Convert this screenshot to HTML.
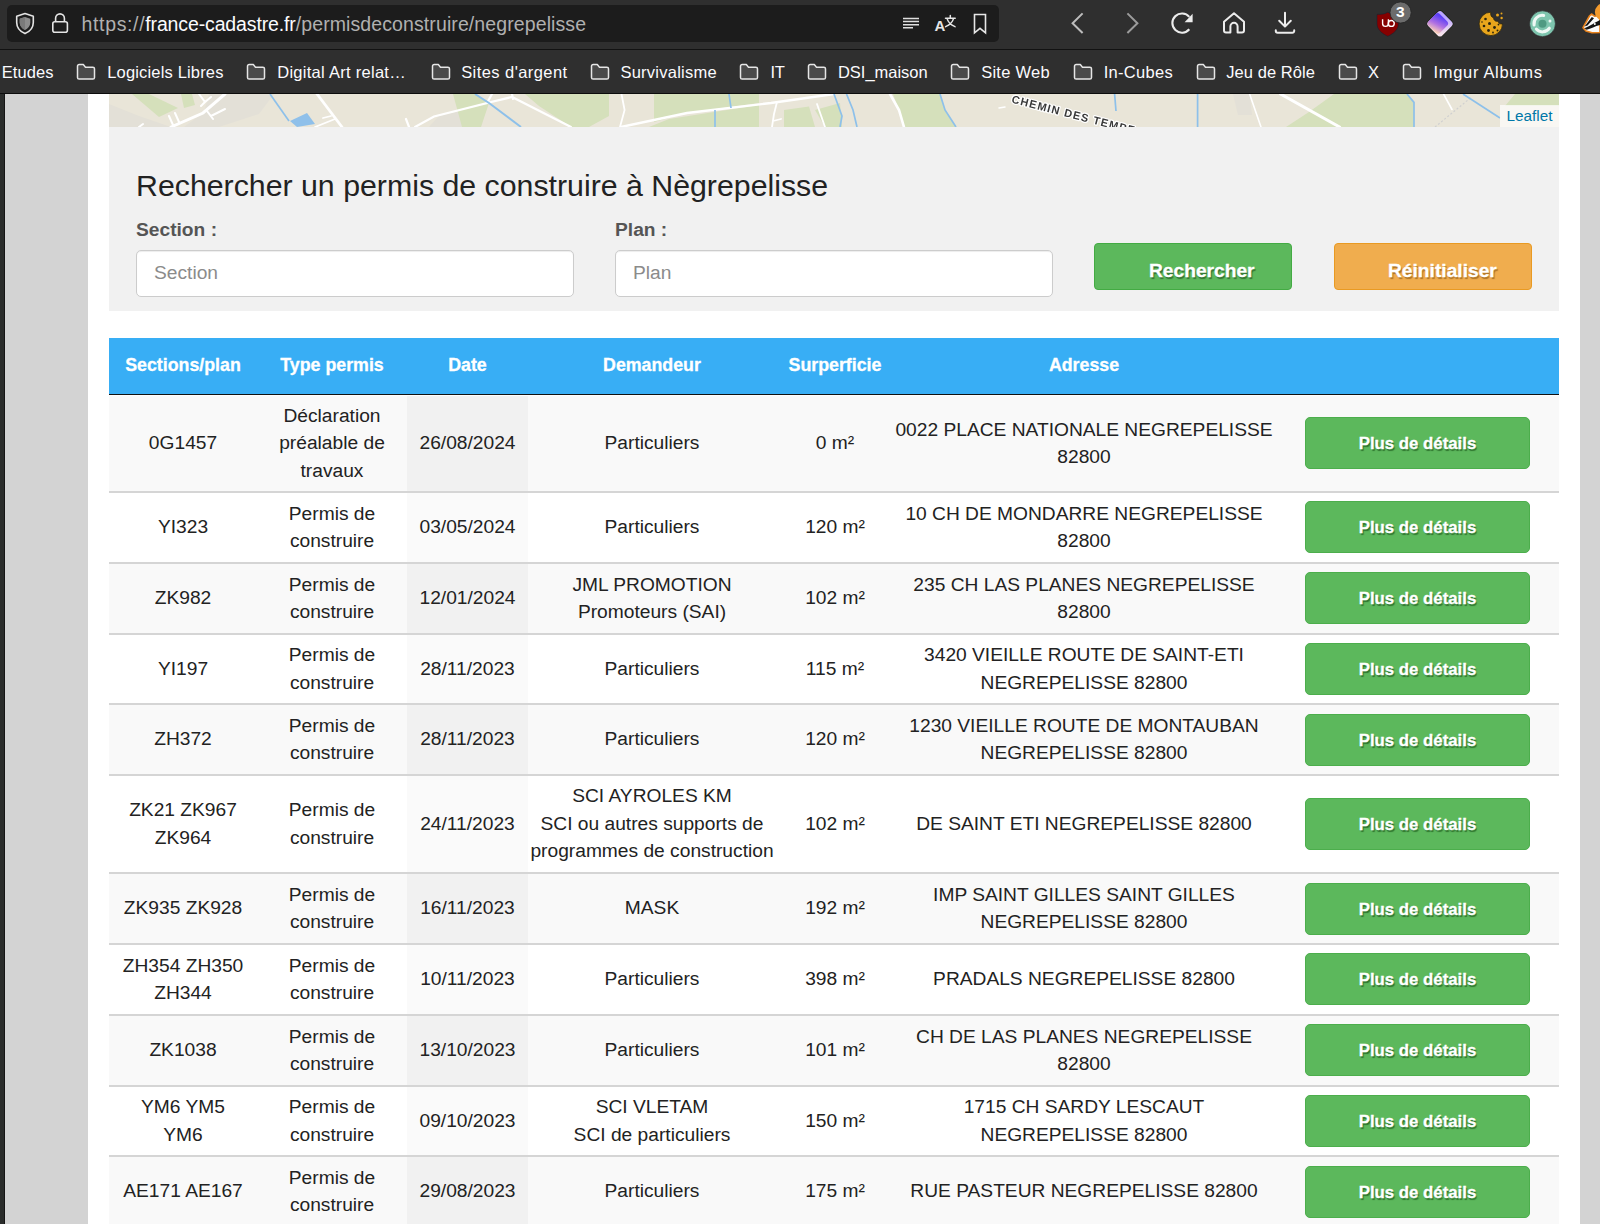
<!DOCTYPE html>
<html lang="fr">
<head>
<meta charset="utf-8">
<title>Permis de construire Nègrepelisse</title>
<style>
*{box-sizing:border-box}
html,body{margin:0;padding:0}
body{width:1600px;height:1224px;overflow:hidden;position:relative;background:#d3d3d3;font-family:"Liberation Sans",sans-serif;color:#111}
/* ---------- browser chrome ---------- */
#chrome{position:absolute;left:0;top:0;width:1600px;height:94px;background:#2f2f2f;z-index:10}
#nav{position:absolute;left:0;top:0;width:1600px;height:49px}
#sep{position:absolute;left:0;top:49px;width:1600px;height:1px;background:#121212}
#urlbar{position:absolute;left:7px;top:5px;width:992px;height:37px;background:#1c1c1c;border-radius:5px}
#url{position:absolute;left:74.5px;top:7.2px;font-size:19.5px;line-height:24px;color:#b0b0b0;white-space:nowrap}
#url b{font-weight:normal;color:#fbfbfe}
#bm{position:absolute;left:0;top:50px;width:1600px;height:43px}
#bm span{position:absolute;top:11px;font-size:16.5px;line-height:22px;color:#fbfbfe;white-space:nowrap}
#chromeline{position:absolute;left:0;top:93px;width:1600px;height:1px;background:#0c0c0c}
.ico{position:absolute}
/* ---------- page ---------- */
#leftstrip{position:absolute;left:0;top:94px;width:5px;height:1130px;background:#2a2c2b;border-right:1px solid #151515}
#white{position:absolute;left:88px;top:94px;width:1492px;height:1130px;background:#fff}
#map{position:absolute;left:109px;top:94px;width:1450px;height:33px;background:#e9e5d8;overflow:hidden}
#leaflet{position:absolute;right:0;bottom:0;width:59px;height:22px;background:rgba(255,255,255,.7);color:#0078a8;font-size:15.3px;line-height:22px;text-align:center}
#search{position:absolute;left:109px;top:127px;width:1450px;height:184px;background:#f1f1f1}
#search h3{position:absolute;left:27px;top:40.5px;margin:0;font-weight:normal;font-size:30.3px;line-height:36px;color:#222;white-space:nowrap}
.lbl{position:absolute;top:91.5px;font-weight:bold;font-size:19.2px;line-height:22px;color:#555;white-space:nowrap}
.inp{position:absolute;top:123px;width:438px;height:47px;background:#fff;border:1px solid #ccc;border-radius:5px;box-shadow:inset 0 1px 1px rgba(0,0,0,.075);font-size:19.2px;line-height:43px;color:#8b8b8b;padding-left:17px}
.btn{position:absolute;color:#fff;font-weight:bold;-webkit-text-stroke:.3px #fff;text-shadow:1.2px 1.8px 1px rgba(0,30,0,.45);border-radius:4px;white-space:nowrap}
.bg{background:#5cb85c;border:1px solid #43ab43}
.bo{background:#f0ad4e;border:1px solid #e99a22;text-shadow:1.2px 1.8px 1px rgba(110,60,0,.5)}
/* ---------- table ---------- */
#tbl{position:absolute;left:109px;top:338px;width:1450px;border-collapse:separate;border-spacing:0;table-layout:fixed;font-size:19.2px;line-height:27.43px;color:#222}
#tbl th{-webkit-text-stroke:.3px #fff;background:#38aef5;color:#fff;font-weight:bold;font-size:17.8px;height:57px;padding:0 0 1px;text-align:center;border-bottom:1px solid #111}
#tbl td{text-align:center;padding:0 0 1px;vertical-align:middle;border-bottom:2px solid #d5d5d5}
#tbl tr:first-child td{border-top:1px solid #fefefe}
#tbl tr.o td{background:#f9f9f9}
#tbl tr.o td.d{background:#f1f1f1}
#tbl tr.e td{background:#fff}
#tbl tr.e td.d{background:#fafafa}
#tbl td.b{vertical-align:top;padding:0}
.db{-webkit-text-stroke:.3px #fff;display:block;margin:0 0 0 31px;width:225px;height:52px;background:#5cb85c;border:1px solid #4cae4c;border-radius:5px;color:#fff;font-weight:bold;font-size:16.8px;line-height:51px;text-shadow:1.2px 1.8px 1px rgba(0,50,0,.5)}
</style>
</head>
<body>
<div id="white"></div>
<div id="leftstrip"></div>
<div id="map"><svg width="1450" height="33" viewBox="0 0 1450 33" style="position:absolute;left:0;top:0;filter:blur(.45px)">
<rect width="1450" height="33" fill="#e9e5d8"/>
<g fill="#e3e0d7"><path d="M0 10 L30 22 L62 33 H0 Z"/><path d="M100 0 H165 L150 20 L110 33 H75 L95 18 Z"/><path d="M1124 0 H1140.600 L1143 21 H1129 Z"/><path d="M330 22 L378 10 L372 33 H320 Z"/></g>
<g fill="#d5e0bb">
<path d="M23 0 H40 L69 14 L50 23 Z"/><path d="M72 0 H83 L86 11 L75 14 Z"/>
<path d="M344 0 H366 L380 9 L372 33 H353 Z"/>
<path d="M416 0 H500 V22 L480 33 H462 L430 12 Z"/>
<path d="M545 0 H650 V9 L578 19 L545 28 Z"/><path d="M560 25 L650 11 V33 H540 Z"/>
<path d="M675 16 L700 12.500 L706 33 H675 Z"/><path d="M706 16 L731 9 L733 33 H716 Z"/>
<path d="M784 0 H831 L836 16 L847 33 H795 L790 16 Z"/>
<path d="M1225 0 H1298 L1305 8.400 V33 H1177 L1200 18 Z"/>
<path d="M1406 0 H1450 V12 H1396 Z"/><path d="M1270 0 H1290 L1280 9 Z"/>
</g>
<g fill="none" stroke="#fff" stroke-linecap="round">
<path d="M62 33 L94 19 L116 0" stroke-width="3"/><path d="M30 33 L34 30 M60 22 L64 31 M66 19 L70 28 M90 0 L96 8 L102 3 M98 17 L104 25 M102 22 L116 15 M96 8 L92 12" stroke-width="2"/>
<path d="M208 0 L233 33" stroke-width="2.800"/><path d="M206 33 L226 25 M214 24 L222 22" stroke-width="1.800"/>
<path d="M297 25 L300 33 M306 33 L325 22.500 L378 9 L383 0" stroke-width="2.200"/><path d="M378 9 L403 3 L462 33 M403 0 L404 5" stroke-width="2.200"/>
<path d="M512.500 0 L515.600 16 L511 33" stroke-width="1.800"/>
<path d="M512 33 L578 19 L662 9 L725 0" stroke-width="2.400"/><path d="M668 8 L665 20 L663 33 M708 10 L716 33 M664 27 L672 25" stroke-width="1.800"/>
<path d="M781 0 L790 16 L795 33" stroke-width="2.600"/><path d="M890 14 L896 13" stroke-width="1.500"/>
<path d="M1140.600 0 L1152 33" stroke-width="1.600"/><path d="M1171.500 0 L1230.600 33" stroke-width="3"/>
<path d="M1334.600 0 L1343 15.500" stroke-width="1.600"/>
</g>
<path d="M1326 33 L1362.800 2.800" fill="none" stroke="#d0d0d0" stroke-width="1.200" stroke-dasharray="2 2"/>
<g fill="none" stroke="#8dc0ea" stroke-width="1.700">
<path d="M161 0 L180 27"/><path d="M366 0 L380 9 L412 33" stroke-width="2"/>
<path d="M620 0 L622 14 M606 16 V33"/><path d="M725 0 L733 22 L731 33 M737.500 0 L744 16 L748 33"/>
<path d="M831 0 L836 16 L847 33"/><path d="M1005.600 0 L1007 17 M1088.600 0 V33"/>
<path d="M1298 0 L1305 8.400 V33"/><path d="M1354 0 L1391 24"/>
</g>
<path d="M181 27 L198 19 L206 30 L188 33 Z" fill="#8fc0ea"/><rect x="934" y="14" width="8" height="3" fill="#8fc0ea"/>
<text transform="translate(902 8.500) rotate(14.500)" font-family="Liberation Sans, sans-serif" font-weight="bold" font-size="11" letter-spacing="1.100" fill="#3a3a3a" stroke="#fff" stroke-width="2.400" paint-order="stroke" stroke-linejoin="round">CHEMIN DES TEMPE</text>
</svg><div id="leaflet">Leaflet</div></div>

<div id="search">
  <h3>Rechercher un permis de construire à Nègrepelisse</h3>
  <div class="lbl" style="left:27px">Section :</div>
  <div class="lbl" style="left:506px">Plan :</div>
  <div class="inp" style="left:27px">Section</div>
  <div class="inp" style="left:506px">Plan</div>
  <div class="btn bg" style="left:985px;top:116px;width:198px;height:47px;font-size:19.2px;line-height:54px;padding-left:54px">Rechercher</div>
  <div class="btn bo" style="left:1225px;top:116px;width:198px;height:47px;font-size:19.2px;line-height:54px;padding-left:53px">Réinitialiser</div>
</div>

<table id="tbl">
<colgroup><col style="width:148px"><col style="width:150px"><col style="width:121px"><col style="width:248px"><col style="width:118px"><col style="width:380px"><col style="width:285px"></colgroup>
<thead><tr><th>Sections/plan</th><th>Type permis</th><th>Date</th><th>Demandeur</th><th>Surperficie</th><th>Adresse</th><th></th></tr></thead>
<tbody>
<tr class="o" style="height:98px"><td>0G1457</td><td>Déclaration<br>préalable de<br>travaux</td><td class="d">26/08/2024</td><td>Particuliers</td><td>0 m²</td><td>0022 PLACE NATIONALE NEGREPELISSE<br>82800</td><td class="b"><span class="db" style="margin-top:21px">Plus de détails</span></td></tr>
<tr class="e" style="height:71px"><td>YI323</td><td>Permis de<br>construire</td><td class="d">03/05/2024</td><td>Particuliers</td><td>120 m²</td><td>10 CH DE MONDARRE NEGREPELISSE<br>82800</td><td class="b"><span class="db" style="margin-top:8px">Plus de détails</span></td></tr>
<tr class="o" style="height:71px"><td>ZK982</td><td>Permis de<br>construire</td><td class="d">12/01/2024</td><td>JML PROMOTION<br>Promoteurs (SAI)</td><td>102 m²</td><td>235 CH LAS PLANES NEGREPELISSE<br>82800</td><td class="b"><span class="db" style="margin-top:8px">Plus de détails</span></td></tr>
<tr class="e" style="height:70px"><td>YI197</td><td>Permis de<br>construire</td><td class="d">28/11/2023</td><td>Particuliers</td><td>115 m²</td><td>3420 VIEILLE ROUTE DE SAINT-ETI<br>NEGREPELISSE 82800</td><td class="b"><span class="db" style="margin-top:8px">Plus de détails</span></td></tr>
<tr class="o" style="height:71px"><td>ZH372</td><td>Permis de<br>construire</td><td class="d">28/11/2023</td><td>Particuliers</td><td>120 m²</td><td>1230 VIEILLE ROUTE DE MONTAUBAN<br>NEGREPELISSE 82800</td><td class="b"><span class="db" style="margin-top:9px">Plus de détails</span></td></tr>
<tr class="e" style="height:98px"><td>ZK21 ZK967<br>ZK964</td><td>Permis de<br>construire</td><td class="d">24/11/2023</td><td>SCI AYROLES KM<br>SCI ou autres supports de<br>programmes de construction</td><td>102 m²</td><td>DE SAINT ETI NEGREPELISSE 82800</td><td class="b"><span class="db" style="margin-top:22px">Plus de détails</span></td></tr>
<tr class="o" style="height:71px"><td>ZK935 ZK928</td><td>Permis de<br>construire</td><td class="d">16/11/2023</td><td>MASK</td><td>192 m²</td><td>IMP SAINT GILLES SAINT GILLES<br>NEGREPELISSE 82800</td><td class="b"><span class="db" style="margin-top:9px">Plus de détails</span></td></tr>
<tr class="e" style="height:71px"><td>ZH354 ZH350<br>ZH344</td><td>Permis de<br>construire</td><td class="d">10/11/2023</td><td>Particuliers</td><td>398 m²</td><td>PRADALS NEGREPELISSE 82800</td><td class="b"><span class="db" style="margin-top:8px">Plus de détails</span></td></tr>
<tr class="o" style="height:71px"><td>ZK1038</td><td>Permis de<br>construire</td><td class="d">13/10/2023</td><td>Particuliers</td><td>101 m²</td><td>CH DE LAS PLANES NEGREPELISSE<br>82800</td><td class="b"><span class="db" style="margin-top:8px">Plus de détails</span></td></tr>
<tr class="e" style="height:70px"><td>YM6 YM5<br>YM6</td><td>Permis de<br>construire</td><td class="d">09/10/2023</td><td>SCI VLETAM<br>SCI de particuliers</td><td>150 m²</td><td>1715 CH SARDY LESCAUT<br>NEGREPELISSE 82800</td><td class="b"><span class="db" style="margin-top:8px">Plus de détails</span></td></tr>
<tr class="o" style="height:71px"><td>AE171 AE167</td><td>Permis de<br>construire</td><td class="d">29/08/2023</td><td>Particuliers</td><td>175 m²</td><td>RUE PASTEUR NEGREPELISSE 82800</td><td class="b"><span class="db" style="margin-top:9px">Plus de détails</span></td></tr>
</tbody>
</table>

<div id="chrome">
  <div id="nav">
    <div id="urlbar">
      <div id="url"><span style="letter-spacing:.65px">https://</span><b style="letter-spacing:-.13px">france-cadastre.fr</b><span style="letter-spacing:.1px">/permisdeconstruire/negrepelisse</span></div>
    </div>
  </div>

<!-- shield -->
<svg class="ico" style="left:14px;top:11px" width="22" height="25" viewBox="0 0 22 25"><path d="M11 2.6 L19.3 5.2 V11.5 C19.3 17 15.6 20.6 11 22.6 C6.4 20.6 2.7 17 2.7 11.500 V5.2 Z" fill="none" stroke="#e4e4e4" stroke-width="1.6" stroke-linejoin="round"/><path d="M11 6 L16.3 7.700 V11.600 C16.3 15.300 14 17.600 11 19.100 C8 17.600 5.700 15.300 5.700 11.600 V7.700 Z" fill="#8c8c8c"/><path d="M11 6 V19.100 C8 17.600 5.700 15.300 5.700 11.600 V7.700 Z" fill="#7a7a7a"/></svg>
<!-- lock -->
<svg class="ico" style="left:50px;top:11px" width="20" height="24" viewBox="0 0 20 24"><rect x="2.800" y="10.800" width="14.600" height="10.400" rx="2" fill="none" stroke="#e4e4e4" stroke-width="1.6"/><path d="M5.600 10.800 V7.300 a4.400 4.400 0 0 1 8.800 0 V10.800" fill="none" stroke="#e4e4e4" stroke-width="1.600"/></svg>
<!-- reader -->
<svg class="ico" style="left:902px;top:16px" width="18" height="14" viewBox="0 0 18 14"><g stroke="#dedede" stroke-width="1.500"><path d="M1 2.500 H17 M1 5.600 H17 M1 8.700 H17 M1 11.800 H11"/></g></svg>
<!-- translate -->
<svg class="ico" style="left:933px;top:12px" width="26" height="24" viewBox="0 0 26 24"><text x="1.500" y="19.400" font-family="Liberation Sans, sans-serif" font-weight="bold" font-size="15" fill="#e6e6e6">A</text><g fill="none" stroke="#e6e6e6" stroke-width="1.500" stroke-linecap="round"><path d="M12.500 6.200 H22.200 M17.300 3.400 V6.200 M14 6.400 C15 10 18 13 22 14.600 M20.600 6.400 C19.600 10 16.600 13 12.600 14.600"/></g></svg>
<!-- bookmark -->
<svg class="ico" style="left:971px;top:12px" width="18" height="24" viewBox="0 0 18 24"><path d="M3.500 2.500 H14.500 V20.800 L9 16.300 L3.500 20.800 Z" fill="none" stroke="#e6e6e6" stroke-width="1.600" stroke-linejoin="miter"/></svg>
<!-- back -->
<svg class="ico" style="left:1068px;top:11px" width="20" height="24" viewBox="0 0 20 24"><path d="M14.600 2.400 L4.600 12.200 L14.600 22" fill="none" stroke="#bdbdbd" stroke-width="2"/></svg>
<!-- forward -->
<svg class="ico" style="left:1122px;top:11px" width="20" height="24" viewBox="0 0 20 24"><path d="M5.400 2.400 L15.400 12.200 L5.400 22" fill="none" stroke="#9c9c9c" stroke-width="2"/></svg>
<!-- reload -->
<svg class="ico" style="left:1168px;top:10px" width="28" height="26" viewBox="0 0 28 26"><path d="M21.300 6.900 A9.600 9.600 0 1 0 21.300 19.300" fill="none" stroke="#ececec" stroke-width="2.100"/><path d="M24.600 3.700 V12.300 H16.600 Z" fill="#ececec"/></svg>
<!-- home -->
<svg class="ico" style="left:1221px;top:10px" width="26" height="26" viewBox="0 0 26 26"><path d="M3 11.800 L13 3.200 L23 11.800 V20.600 a2 2 0 0 1 -2 2 H16.600 V16.400 a3.600 3.600 0 0 0 -7.200 0 V22.600 H5 a2 2 0 0 1 -2 -2 Z" fill="none" stroke="#ececec" stroke-width="2" stroke-linejoin="round"/></svg>
<!-- download -->
<svg class="ico" style="left:1272px;top:10px" width="26" height="26" viewBox="0 0 26 26"><g fill="none" stroke="#ececec" stroke-width="2" stroke-linecap="round" stroke-linejoin="round"><path d="M13 2.800 V16.400 M7.200 10.800 L13 16.600 L18.800 10.800"/><path d="M3.800 20.200 V21 a1.800 1.800 0 0 0 1.800 1.800 H20.400 a1.800 1.800 0 0 0 1.800 -1.800 V20.200"/></g></svg>
<!-- ublock -->
<svg class="ico" style="left:1374px;top:0px" width="40" height="40" viewBox="0 0 40 40"><path d="M13.800 12.200 C11 14 7 14.600 3 14.400 V24 C3 29.500 8 33.600 13.800 36.300 C19.600 33.600 24.400 29.500 24.400 24 V14.400 C20.600 14.600 16.600 14 13.800 12.200 Z" fill="#860000" stroke="#123" stroke-width=".5"/><g fill="none" stroke="#fff" stroke-width="1.400"><path d="M8.600 19.300 V23.500 a2.900 2.900 0 0 0 5.800 0 V19.300"/><circle cx="17.300" cy="23.400" r="2.950"/></g><circle cx="26.600" cy="12.500" r="10.600" fill="#6c6c6c" stroke="#242424" stroke-width=".8"/><text x="26.300" y="17.300" text-anchor="middle" font-family="Liberation Sans, sans-serif" font-weight="bold" font-size="15.500" fill="#fff">3</text></svg>
<!-- purple diamond -->
<svg class="ico" style="left:1426px;top:9px" width="30" height="30" viewBox="0 0 30 30"><defs><linearGradient id="pg" gradientUnits="userSpaceOnUse" x1="17" y1="6" x2="8" y2="24"><stop offset="0.120" stop-color="#5d3ff6"/><stop offset="0.550" stop-color="#b071e2"/><stop offset="0.950" stop-color="#ffd3b4"/></linearGradient><linearGradient id="pg2" gradientUnits="userSpaceOnUse" x1="0" y1="3" x2="0" y2="27"><stop offset="0.200" stop-color="#b9a4ff"/><stop offset="0.900" stop-color="#f6e2ee"/></linearGradient></defs><path d="M14 5.600 L23.200 14.800 L14 24 L4.800 14.800 Z" fill="url(#pg2)" stroke="#182010" stroke-width="8" stroke-linejoin="round"/><path d="M14 5.600 L23.200 14.800 L14 24 L4.800 14.800 Z" fill="url(#pg2)" stroke="url(#pg2)" stroke-width="6.800" stroke-linejoin="round"/><path d="M11.800 7.400 L18.800 14.400 L11.800 21.400 L4.800 14.400 Z" fill="url(#pg)" stroke="url(#pg)" stroke-width="6.400" stroke-linejoin="round"/></svg>
<!-- cookie -->
<svg class="ico" style="left:1477px;top:10px" width="30" height="28" viewBox="0 0 30 28"><path d="M13.800 2.200 a11.700 11.700 0 1 0 11.700 11.700 c-2.400 .5 -4.300 -.9 -4.400 -2.700 c-2.400 .7 -4.700 -1 -4.500 -3.500 c-1.900 -.2 -3.400 -2.300 -2.800 -5.500 z" fill="#e8a51c" stroke="#2a2410" stroke-width=".8"/><g fill="#2a2410"><circle cx="8.500" cy="9" r="1.300"/><circle cx="12.500" cy="13.500" r="1.500"/><circle cx="7" cy="16" r="1.300"/><circle cx="11.500" cy="20.500" r="1.400"/><circle cx="17.500" cy="17.500" r="1.400"/><circle cx="20.500" cy="20.500" r="1"/><circle cx="16" cy="22.500" r=".9"/><circle cx="5" cy="12" r=".8"/><circle cx="21.500" cy="14.500" r=".9"/></g><g fill="#e8a51c"><circle cx="20.500" cy="5" r="1.500"/><circle cx="24.500" cy="3.600" r="1"/><circle cx="24.600" cy="8" r="1.200"/></g></svg>
<!-- green circle -->
<svg class="ico" style="left:1528px;top:9px" width="30" height="30" viewBox="0 0 30 30"><circle cx="14.500" cy="14.750" r="12.900" fill="#7ec5ae" stroke="#2c2228" stroke-width=".6"/><g fill="none" stroke="#eef8f4" stroke-width="3" stroke-linecap="round"><path d="M6.100 16 A8.300 8.300 0 0 1 15.700 6.500"/><path d="M8.300 20.100 A8.300 8.300 0 0 0 21.400 19.200"/></g><circle cx="14.500" cy="14.750" r="4" fill="#4f9a82"/><circle cx="22" cy="12" r="1.500" fill="#eef8f4"/></svg>
<!-- badger -->
<svg class="ico" style="left:1578px;top:0px" width="22" height="40" viewBox="0 0 22 40"><path d="M5 27.600 L11.500 16 L13.500 14 L16.500 16.200 L22 15.500 V32.500 L14 32.800 L8 31 Z" fill="#fbfbfb" stroke="#e8821c" stroke-width="1.600" stroke-linejoin="round"/><path d="M6.500 26.500 L13.800 17 L16 18.200 L9.500 25.600 Z M6.200 28 C10 27.500 14 24 22 20 V25 C17 26 13 29 8.500 29.800 Z" fill="#141414"/><circle cx="16.800" cy="24" r="1" fill="#fff"/><circle cx="25.500" cy="12" r="8.600" fill="#f39a2c"/></svg>
  <div id="sep"></div>
  <div id="bm"><span style="left:1.70px;letter-spacing:0.09px">Etudes</span><svg class="ico" style="left:76.25px;top:13px" width="20" height="18" viewBox="0 0 20 18"><path d="M1.5 3.2 a1.6 1.6 0 0 1 1.6-1.6 h4.2 l2.2 2.6 h7.4 a1.6 1.6 0 0 1 1.6 1.6 v8.6 a1.6 1.6 0 0 1-1.6 1.6 h-13.8 a1.6 1.6 0 0 1-1.6-1.6 z" fill="#4a4a4a" stroke="#e6e6e6" stroke-width="1.5" stroke-linejoin="round"/></svg><span style="left:107.20px;letter-spacing:0.17px">Logiciels Libres</span><svg class="ico" style="left:246.25px;top:13px" width="20" height="18" viewBox="0 0 20 18"><path d="M1.5 3.2 a1.6 1.6 0 0 1 1.6-1.6 h4.2 l2.2 2.6 h7.4 a1.6 1.6 0 0 1 1.6 1.6 v8.6 a1.6 1.6 0 0 1-1.6 1.6 h-13.8 a1.6 1.6 0 0 1-1.6-1.6 z" fill="#4a4a4a" stroke="#e6e6e6" stroke-width="1.5" stroke-linejoin="round"/></svg><span style="left:277.20px;letter-spacing:0.28px">Digital Art relat…</span><svg class="ico" style="left:430.75px;top:13px" width="20" height="18" viewBox="0 0 20 18"><path d="M1.5 3.2 a1.6 1.6 0 0 1 1.6-1.6 h4.2 l2.2 2.6 h7.4 a1.6 1.6 0 0 1 1.6 1.6 v8.6 a1.6 1.6 0 0 1-1.6 1.6 h-13.8 a1.6 1.6 0 0 1-1.6-1.6 z" fill="#4a4a4a" stroke="#e6e6e6" stroke-width="1.5" stroke-linejoin="round"/></svg><span style="left:461.20px;letter-spacing:0.43px">Sites d'argent</span><svg class="ico" style="left:590.00px;top:13px" width="20" height="18" viewBox="0 0 20 18"><path d="M1.5 3.2 a1.6 1.6 0 0 1 1.6-1.6 h4.2 l2.2 2.6 h7.4 a1.6 1.6 0 0 1 1.6 1.6 v8.6 a1.6 1.6 0 0 1-1.6 1.6 h-13.8 a1.6 1.6 0 0 1-1.6-1.6 z" fill="#4a4a4a" stroke="#e6e6e6" stroke-width="1.5" stroke-linejoin="round"/></svg><span style="left:620.45px;letter-spacing:0.24px">Survivalisme</span><svg class="ico" style="left:738.75px;top:13px" width="20" height="18" viewBox="0 0 20 18"><path d="M1.5 3.2 a1.6 1.6 0 0 1 1.6-1.6 h4.2 l2.2 2.6 h7.4 a1.6 1.6 0 0 1 1.6 1.6 v8.6 a1.6 1.6 0 0 1-1.6 1.6 h-13.8 a1.6 1.6 0 0 1-1.6-1.6 z" fill="#4a4a4a" stroke="#e6e6e6" stroke-width="1.5" stroke-linejoin="round"/></svg><span style="left:770.45px;letter-spacing:-0.38px">IT</span><svg class="ico" style="left:807.00px;top:13px" width="20" height="18" viewBox="0 0 20 18"><path d="M1.5 3.2 a1.6 1.6 0 0 1 1.6-1.6 h4.2 l2.2 2.6 h7.4 a1.6 1.6 0 0 1 1.6 1.6 v8.6 a1.6 1.6 0 0 1-1.6 1.6 h-13.8 a1.6 1.6 0 0 1-1.6-1.6 z" fill="#4a4a4a" stroke="#e6e6e6" stroke-width="1.5" stroke-linejoin="round"/></svg><span style="left:837.95px;letter-spacing:-0.02px">DSI_maison</span><svg class="ico" style="left:950.00px;top:13px" width="20" height="18" viewBox="0 0 20 18"><path d="M1.5 3.2 a1.6 1.6 0 0 1 1.6-1.6 h4.2 l2.2 2.6 h7.4 a1.6 1.6 0 0 1 1.6 1.6 v8.6 a1.6 1.6 0 0 1-1.6 1.6 h-13.8 a1.6 1.6 0 0 1-1.6-1.6 z" fill="#4a4a4a" stroke="#e6e6e6" stroke-width="1.5" stroke-linejoin="round"/></svg><span style="left:981.20px;letter-spacing:0.25px">Site Web</span><svg class="ico" style="left:1073.25px;top:13px" width="20" height="18" viewBox="0 0 20 18"><path d="M1.5 3.2 a1.6 1.6 0 0 1 1.6-1.6 h4.2 l2.2 2.6 h7.4 a1.6 1.6 0 0 1 1.6 1.6 v8.6 a1.6 1.6 0 0 1-1.6 1.6 h-13.8 a1.6 1.6 0 0 1-1.6-1.6 z" fill="#4a4a4a" stroke="#e6e6e6" stroke-width="1.5" stroke-linejoin="round"/></svg><span style="left:1103.70px;letter-spacing:0.31px">In-Cubes</span><svg class="ico" style="left:1196.25px;top:13px" width="20" height="18" viewBox="0 0 20 18"><path d="M1.5 3.2 a1.6 1.6 0 0 1 1.6-1.6 h4.2 l2.2 2.6 h7.4 a1.6 1.6 0 0 1 1.6 1.6 v8.6 a1.6 1.6 0 0 1-1.6 1.6 h-13.8 a1.6 1.6 0 0 1-1.6-1.6 z" fill="#4a4a4a" stroke="#e6e6e6" stroke-width="1.5" stroke-linejoin="round"/></svg><span style="left:1226.20px;letter-spacing:0.08px">Jeu de Rôle</span><svg class="ico" style="left:1338.25px;top:13px" width="20" height="18" viewBox="0 0 20 18"><path d="M1.5 3.2 a1.6 1.6 0 0 1 1.6-1.6 h4.2 l2.2 2.6 h7.4 a1.6 1.6 0 0 1 1.6 1.6 v8.6 a1.6 1.6 0 0 1-1.6 1.6 h-13.8 a1.6 1.6 0 0 1-1.6-1.6 z" fill="#4a4a4a" stroke="#e6e6e6" stroke-width="1.5" stroke-linejoin="round"/></svg><span style="left:1367.95px;letter-spacing:1.15px">X</span><svg class="ico" style="left:1402.00px;top:13px" width="20" height="18" viewBox="0 0 20 18"><path d="M1.5 3.2 a1.6 1.6 0 0 1 1.6-1.6 h4.2 l2.2 2.6 h7.4 a1.6 1.6 0 0 1 1.6 1.6 v8.6 a1.6 1.6 0 0 1-1.6 1.6 h-13.8 a1.6 1.6 0 0 1-1.6-1.6 z" fill="#4a4a4a" stroke="#e6e6e6" stroke-width="1.5" stroke-linejoin="round"/></svg><span style="left:1433.45px;letter-spacing:0.69px">Imgur Albums</span></div>
  <div id="chromeline"></div>
</div>
</body>
</html>
